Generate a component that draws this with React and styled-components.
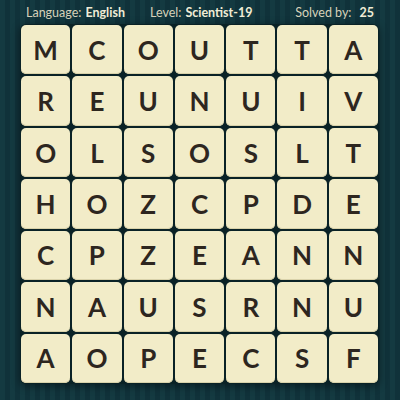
import React from 'react'
import styled, { createGlobalStyle } from 'styled-components'

const GlobalStyle = createGlobalStyle`
  html, body { margin: 0; padding: 0; }
  body { font-family: Lato, "Open Sans", sans-serif; }
`

const rows = [
  'MCOUTTA',
  'REUNUIV',
  'OLSOSLT',
  'HOZCPDE',
  'CPZEANN',
  'NAUSRNU',
  'AOPECSF',
]

const Page = styled.div`
  width: 400px;
  height: 400px;
  overflow: hidden;
  background: repeating-linear-gradient(
    90deg,
    #143a41 0px,
    #143a41 5px,
    #10323a 5px,
    #10323a 10px
  );
  display: flex;
  flex-direction: column;
`

const Header = styled.div`
  height: 24px;
  padding: 0 26px;
  display: grid;
  grid-template-columns: 124px 1fr auto;
  align-items: center;
  color: #e2dec6;
  font-size: 12.5px;
`

const Label = styled.span`
  font-weight: 400;
  color: #d6d2ba;
`

const Value = styled.span`
  font-weight: 700;
  color: #f0ecd6;
  margin-left: ${p => p.$gap || 4}px;
`

const Board = styled.div`
  margin-left: 20px;
  width: 359px;
  height: 360px;
  box-sizing: border-box;
  padding: 1px;
  background: #0a2226;
  border-radius: 6px;
  box-shadow: 0 2px 8px rgba(0, 0, 0, 0.45);
  display: grid;
  grid-template-columns: repeat(7, 1fr);
  grid-template-rows: repeat(7, 1fr);
  gap: 2px;
`

const Tile = styled.div`
  background: #f2ecc8;
  border-radius: 5px;
  box-shadow: inset 0 -1px 0 #d9d2aa;
  display: flex;
  align-items: center;
  justify-content: center;
  color: #2d261f;
  font-size: 26px;
  font-weight: 700;
  line-height: 1;
`

export default function App() {
  return (
    <>
      <GlobalStyle />
      <Page>
        <Header>
          <span><Label>Language:</Label><Value>English</Value></span>
          <span><Label>Level:</Label><Value>Scientist-19</Value></span>
          <span><Label>Solved by:</Label><Value $gap={8}>25</Value></span>
        </Header>
        <Board>
          {rows.map((row, r) =>
            row.split('').map((ch, c) => <Tile key={`${r}-${c}`}>{ch}</Tile>)
          )}
        </Board>
      </Page>
    </>
  )
}
